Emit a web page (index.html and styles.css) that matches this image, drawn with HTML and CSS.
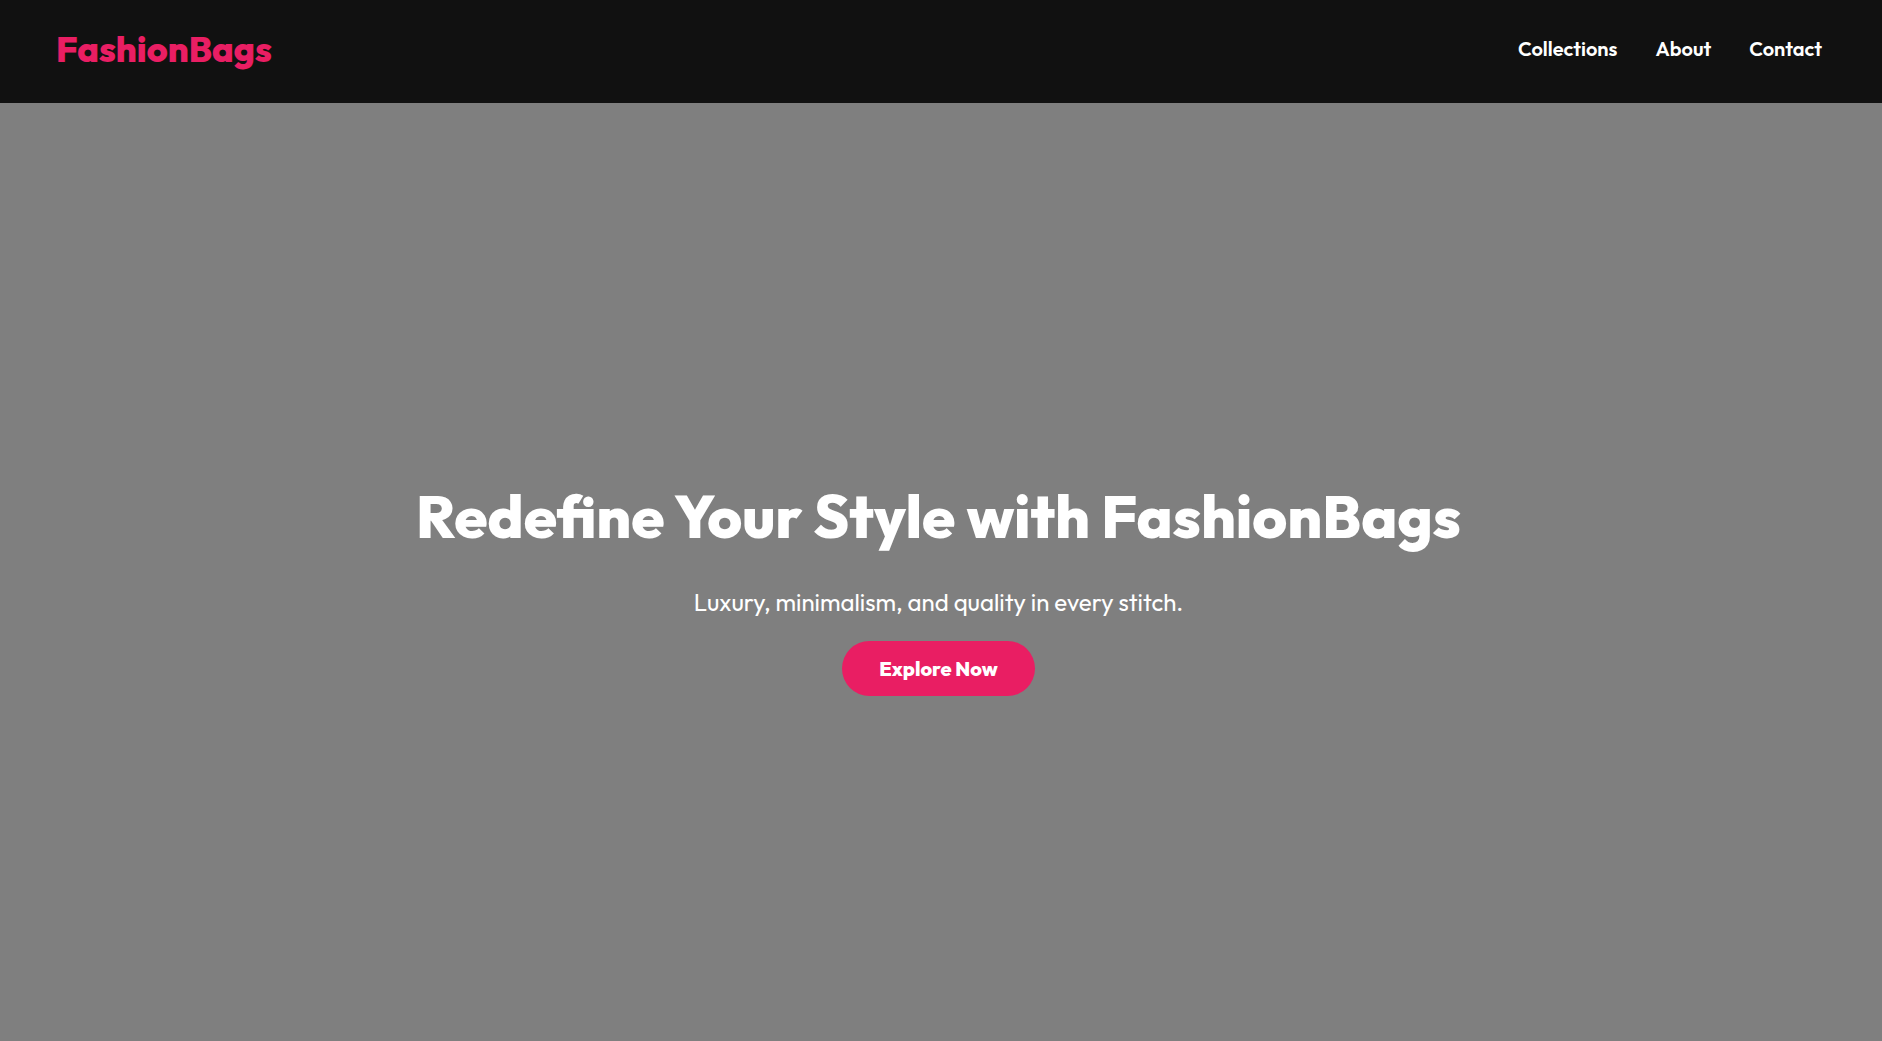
FILE: index.html
```html
<!DOCTYPE html>
<html lang="en">
<head>
<meta charset="utf-8">
<meta name="viewport" content="width=device-width, initial-scale=1">
<title>FashionBags</title>
<link rel="stylesheet" href="styles.css">
</head>
<body>
<header class="site-header">
  <a class="logo" href="#">FashionBags</a>
  <nav class="site-nav">
    <a href="#collections">Collections</a>
    <a href="#about">About</a>
    <a href="#contact">Contact</a>
  </nav>
</header>
<main class="hero">
  <h1 class="hero-title">Redefine Your Style with FashionBags</h1>
  <p class="hero-text">Luxury, minimalism, and quality in every stitch.</p>
  <button class="hero-button" type="button">Explore Now</button>
</main>
</body>
</html>
```

FILE: styles.css
```css
* {
  box-sizing: border-box;
}

body {
  display: flex;
  flex-direction: column;
  min-height: 100vh;
  margin: 0;
  background: #7f7f7f;
  color: #fff;
  font-family: Outfit, Lato, sans-serif;
}

.site-header {
  display: flex;
  align-items: center;
  justify-content: space-between;
  padding: 27px 60px 32px 56px;
  background: #111;
}

.logo {
  color: #e91e63;
  font-size: 36px;
  font-weight: 800;
  line-height: 44px;
  text-decoration: none;
}

.site-nav {
  display: flex;
  gap: 38px;
}

.site-nav a {
  color: #fff;
  font-size: 20px;
  font-weight: 600;
  line-height: 24px;
  text-decoration: none;
}

.hero {
  display: flex;
  flex: 1;
  flex-direction: column;
  align-items: center;
  justify-content: center;
  padding: 28px 5px 0 0;
  text-align: center;
}

.hero-title {
  margin: 0 0 31px;
  font-size: 60px;
  font-weight: 800;
  line-height: 80px;
}

.hero-text {
  margin: 0 0 24px;
  font-size: 24px;
  line-height: 30px;
}

.hero-button {
  padding: 16px 37px;
  border: 0;
  border-radius: 28px;
  background: #e91e63;
  color: #fff;
  font: inherit;
  font-size: 20px;
  font-weight: 800;
  line-height: 23px;
  cursor: pointer;
}
```
